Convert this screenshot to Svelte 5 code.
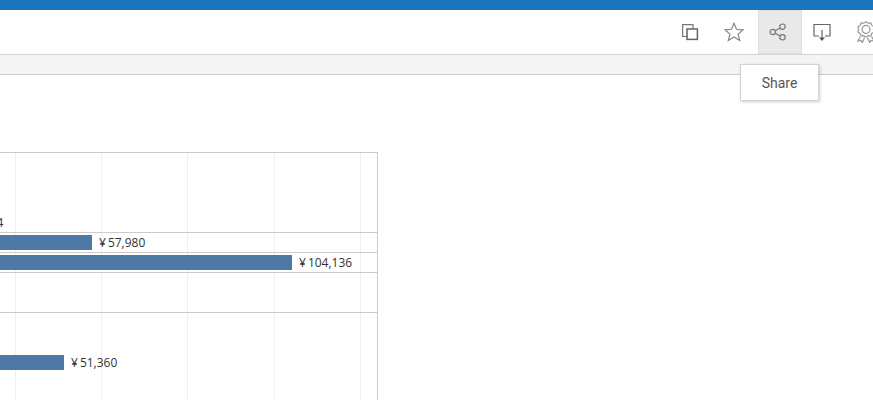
<script>
  const gridlines = [15, 101, 187, 274, 360];
  const rows = [
    { height: 79, bar: 0, label: '54,984', clipped: true },
    { height: 19, bar: 92, label: '57,980' },
    { height: 19, bar: 292, label: '104,136' },
    { height: 39 },
    { height: 87, bar: 64, label: '51,360', offset: 42 }
  ];
</script>

<div class="page">
  <div class="topbar"></div>
  <div class="toolbar">
    <button class="tool" aria-label="Duplicate">
      <svg width="20" height="20" viewBox="0 0 20 20" fill="none" stroke="#777" stroke-width="1.2">
        <path d="M7.5 14.500H2.600V2.600H13V7" />
        <rect x="7" y="7" width="10.400" height="10.400" stroke="#666" stroke-width="1.5" />
      </svg>
    </button>
    <button class="tool" aria-label="Favorite">
      <svg width="20" height="20" viewBox="0 0 20 20" fill="none" stroke="#888" stroke-width="1.2">
        <path d="M10 1.2l2.500 6.100 6.600.5-5 4.300 1.600 6.400-5.700-3.500-5.700 3.500 1.600-6.400-5-4.300 6.600-.5z" />
      </svg>
    </button>
    <button class="tool active" aria-label="Share">
      <svg width="20" height="20" viewBox="0 0 20 20" fill="none" stroke="#777" stroke-width="1.2">
        <circle cx="4.800" cy="10" r="2.700" />
        <circle cx="14.500" cy="4.700" r="2.700" />
        <circle cx="14.500" cy="15.300" r="2.700" />
        <path d="M7.200 8.700l4.900-2.700M7.200 11.300l4.900 2.700" />
      </svg>
    </button>
    <button class="tool" aria-label="Download">
      <svg width="20" height="20" viewBox="0 0 20 20" fill="none" stroke="#666" stroke-width="1.2">
        <path d="M7 14H2V2.500h16V14h-5" />
        <path d="M10 8v8" />
        <path d="M7 15.500h6L10 19z" fill="#555" stroke="none" />
      </svg>
    </button>
    <button class="tool" aria-label="Metrics">
      <svg width="20" height="22" viewBox="0 0 20 22" fill="none" stroke="#999" stroke-width="1.2">
        <path d="M10 .8l2.200 1.400 2.600-.2 1 2.400 2.200 1.400-.6 2.600.6 2.600-2.200 1.400-1 2.400-2.600-.2L10 16l-2.200-1.400-2.600.2-1-2.400L2 11l.6-2.600L2 5.800l2.200-1.400 1-2.400 2.600.2z" />
        <circle cx="10" cy="8.400" r="4" />
        <path d="M4.500 15.500L1.800 20l3.200-.6 1.400 2.200 2.200-5.200M15.500 15.500l2.700 4.500-3.200-.6-1.400 2.200-2.200-5.200" />
      </svg>
    </button>
  </div>
  <div class="band"></div>

  <div class="content">
    <div class="chart">
      {#each gridlines as x}
        <span class="gridline" style="left: {x}px"></span>
      {/each}
      {#each rows as row}
        <div class="row" style="height: {row.height}px">
          {#if row.clipped}
            <span class="value clipped"><span class="yen">¥</span>{row.label}</span>
          {:else if row.label}
            <div class="mark" style="margin-top: {row.offset ?? 2}px">
              <span class="bar" style="width: {row.bar}px"></span>
              <span class="value"><span class="yen">¥</span>{row.label}</span>
            </div>
          {/if}
        </div>
      {/each}
    </div>
  </div>

  <div class="tooltip">Share</div>
</div>

<style>
  :global(body) {
    margin: 0;
    background: #fff;
  }
  .page {
    position: relative;
    width: 873px;
    height: 400px;
    overflow: hidden;
    font-family: "Open Sans", "Liberation Sans", Arial, sans-serif;
  }
  .topbar {
    height: 10px;
    background: #1b75bb;
  }
  .toolbar {
    box-sizing: border-box;
    height: 45px;
    display: flex;
    justify-content: flex-end;
    margin-right: -17px;
    border-bottom: 1px solid #d4d4d4;
  }
  .tool {
    box-sizing: border-box;
    width: 44px;
    height: 44px;
    padding: 0 4px 0 0;
    display: flex;
    align-items: center;
    justify-content: center;
    background: transparent;
    border: 0;
  }
  .tool.active {
    background: #e9e9e9;
    border: 1px solid #dfdfdf;
  }
  .band {
    box-sizing: border-box;
    height: 20px;
    background: #f4f4f4;
    border-bottom: 1px solid #cbcbcb;
  }
  .content {
    padding-top: 77px;
  }
  .chart {
    position: relative;
    box-sizing: border-box;
    width: 378px;
    border-top: 1px solid #cbcbcb;
    border-right: 1px solid #cbcbcb;
  }
  .gridline {
    position: absolute;
    top: 0;
    bottom: 0;
    width: 1px;
    background: #efefef;
  }
  .row {
    position: relative;
    display: flex;
    border-bottom: 1px solid #cbcbcb;
  }
  .row:last-child {
    border-bottom: 0;
  }
  .mark {
    display: flex;
    align-items: center;
    height: 15px;
    gap: 7px;
  }
  .bar {
    height: 15px;
    background: #4e79a7;
  }
  .value {
    font-size: 12px;
    line-height: 15px;
    color: #333;
    white-space: nowrap;
  }
  .yen {
    margin-right: 2px;
  }
  .clipped {
    margin-top: 62px;
    margin-left: -43px;
  }
  .tooltip {
    position: absolute;
    left: 740px;
    top: 64px;
    box-sizing: border-box;
    width: 79px;
    height: 37px;
    display: flex;
    align-items: center;
    justify-content: center;
    background: #fff;
    border: 1px solid #d4d4d4;
    box-shadow: 1px 1px 3px rgba(0, 0, 0, 0.2);
    font-family: Roboto, "Liberation Sans", sans-serif;
    font-size: 14px;
    color: #555;
  }
</style>
